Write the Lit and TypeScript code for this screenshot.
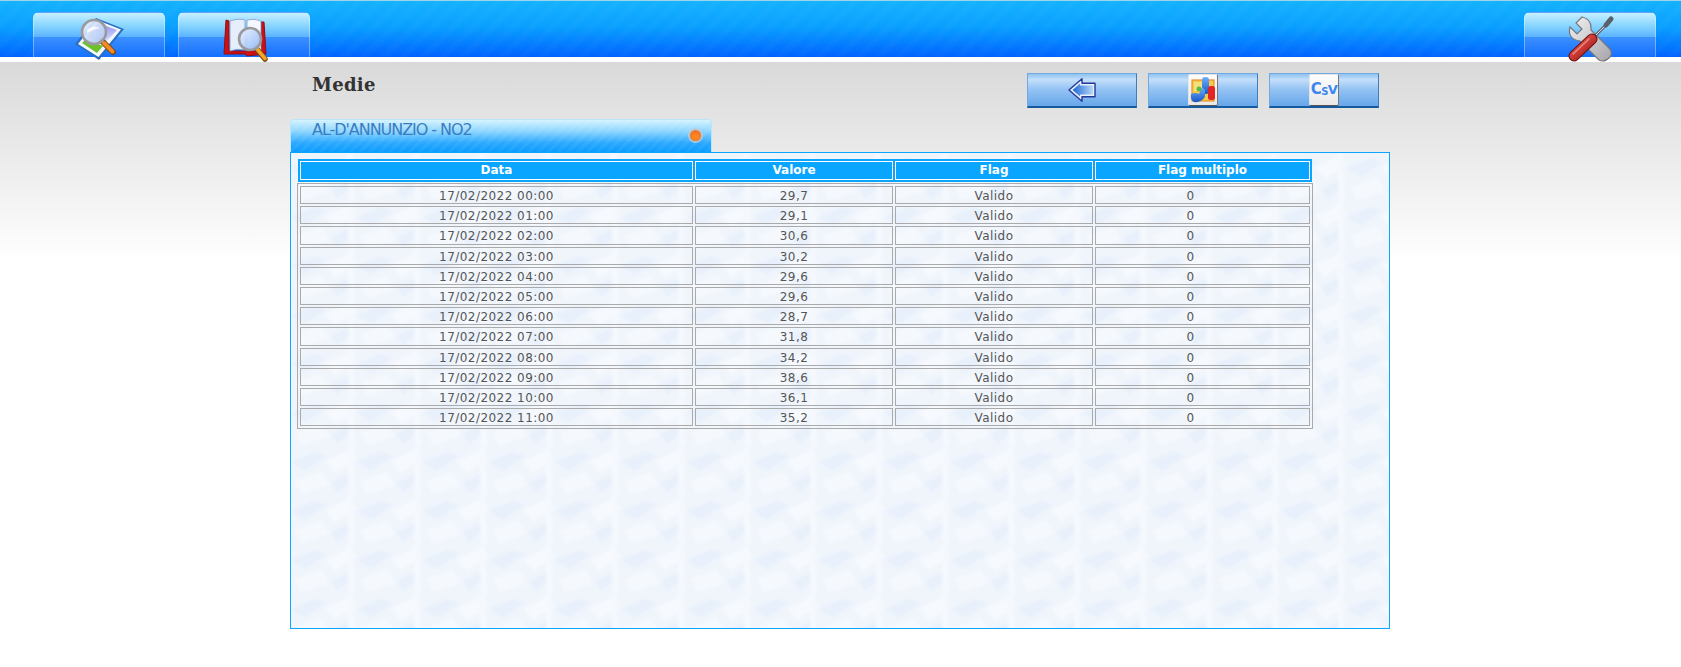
import { LitElement, html, css } from "lit";
import { customElement } from "lit/decorators.js";

const ROWS: [string, string][] = [
  ["00:00", "29,7"], ["01:00", "29,1"], ["02:00", "30,6"], ["03:00", "30,2"],
  ["04:00", "29,6"], ["05:00", "29,6"], ["06:00", "28,7"], ["07:00", "31,8"],
  ["08:00", "34,2"], ["09:00", "38,6"], ["10:00", "36,1"], ["11:00", "35,2"],
];

const mapIcon = html`<svg class="ico-map" width="52" height="46" viewBox="0 0 52 46">
  <defs>
    <linearGradient id="gl" x1="0" y1="0" x2="1" y2="1"><stop offset="0" stop-color="#eef4ff"/><stop offset="1" stop-color="#a9c4f2"/></linearGradient>
    <linearGradient id="sky" x1="0" y1="0" x2="0" y2="1"><stop offset="0" stop-color="#8f8ff0"/><stop offset="1" stop-color="#e4e8ff"/></linearGradient>
  </defs>
  <path d="M22 1 L50 12 L25 43 L1 27 Z" fill="#2a6fc0"/>
  <path d="M23 3 L47 12.5 L24.5 40 L4 27 Z" fill="#f4f8ff"/>
  <path d="M24 6 L43 13 L30 27 L12 20 Z" fill="url(#sky)"/>
  <path d="M12 22 L29 29 L23 36 L8 26 Z" fill="#6cc22a"/>
  <path d="M28 24 L39 35" stroke="#7a4a10" stroke-width="6" stroke-linecap="round"/>
  <path d="M30 26 L38.500 34.500" stroke="#f58a1f" stroke-width="4" stroke-linecap="round"/>
  <circle cx="20" cy="15" r="12" fill="url(#gl)" fill-opacity=".92" stroke="#9a9a9e" stroke-width="2.600"/>
  <path d="M13 13 Q19 7 26 11 Q20 12 13 16 Z" fill="#fff" opacity=".8"/>
</svg>`;

const bookIcon = html`<svg class="ico-book" width="48" height="46" viewBox="0 0 48 46">
  <defs><linearGradient id="gb" x1="0" y1="0" x2="1" y2="1"><stop offset="0" stop-color="#eef4ff"/><stop offset="1" stop-color="#8db6f5"/></linearGradient></defs>
  <path d="M5 3 L3 37 L24 37 L26 39 L45 37 L43 5 L40 5 L40 34 L8 34 L8 4 Z" fill="#cf0f14" stroke="#8a1018" stroke-width="1"/>
  <path d="M9 4 Q18 1 24 3 L24 33 Q16 31 9 34 Z" fill="#e6eefb" stroke="#7d9bc8" stroke-width=".8"/>
  <path d="M26 3 Q33 1 40 4 L40 34 Q33 31 26 33 Z" fill="#f3f7ff" stroke="#7d9bc8" stroke-width=".8"/>
  <path d="M35 31 L44 42" stroke="#7a4a10" stroke-width="5.500" stroke-linecap="round"/>
  <path d="M36 32 L44 41.500" stroke="#f5a623" stroke-width="3.500" stroke-linecap="round"/>
  <circle cx="29" cy="22" r="11" fill="url(#gb)" fill-opacity=".95" stroke="#9a9a9e" stroke-width="2.600"/>
</svg>`;

const toolsIcon = html`<svg class="ico-tools" width="50" height="48" viewBox="0 0 50 48">
  <defs>
    <linearGradient id="gw" x1="0" y1="0" x2="1" y2="1"><stop offset="0" stop-color="#f4f4f4"/><stop offset="1" stop-color="#a4a4aa"/></linearGradient>
    <linearGradient id="gr" x1="0" y1="0" x2="1" y2="1"><stop offset="0" stop-color="#ee6055"/><stop offset="1" stop-color="#a01414"/></linearGradient>
  </defs>
  <path d="M16 2 L10 8 L16 14 L11 19 L4 12 Q1 24 14 26 L33 45 Q38 48 44 42 Q47 37 43 33 L25 15 Q26 4 16 2 Z" fill="url(#gw)" stroke="#77777d" stroke-width="1.200"/>
  <path d="M26 24 L42 8" stroke="#5f656e" stroke-width="3"/>
  <path d="M27 23 L41 9" stroke="#d8dbe0" stroke-width="1"/>
  <path d="M40 10 L45 4" stroke="#58606a" stroke-width="5" stroke-linecap="round"/>
  <path d="M8 41 L26 24" stroke="#6d1010" stroke-width="11" stroke-linecap="round"/>
  <path d="M8 41 L26 24" stroke="url(#gr)" stroke-width="9" stroke-linecap="round"/>
  <path d="M7 39 L23 24" stroke="#f6a79f" stroke-width="1.500" stroke-linecap="round" opacity=".7"/>
</svg>`;

const backIcon = html`<svg width="28" height="24" viewBox="0 0 28 24">
  <defs><linearGradient id="ga" x1="0" y1="0" x2="1" y2="0"><stop offset="0" stop-color="#1f66d6"/><stop offset="1" stop-color="#b6d8f9"/></linearGradient></defs>
  <path d="M1 12 L14 .8 L14 5.200 L27 5.200 L27 18.800 L14 18.800 L14 23.200 Z" fill="#e8f0fc" stroke="#26379a" stroke-width="1.400" stroke-linejoin="round"/>
  <path d="M4.500 12 L12 5.500 L12 7.500 L25 7.500 L25 16.500 L12 16.500 L12 18.500 Z" fill="url(#ga)"/>
</svg>`;

const chartIcon = html`<svg width="26" height="26" viewBox="0 0 26 26">
  <defs><linearGradient id="gc" x1="0" y1="0" x2="0" y2="1"><stop offset="0" stop-color="#6fb0ff"/><stop offset="1" stop-color="#1858c8"/></linearGradient></defs>
  <rect x="2" y="3" width="22" height="21" fill="#f7c948" stroke="#e8912a" stroke-width="1.200"/>
  <rect x="4" y="5" width="11" height="9" fill="#f3e27c"/>
  <rect x="12" y="0" width="7" height="17" rx="3" fill="url(#gc)"/>
  <rect x="18" y="9" width="7" height="14" rx="2.500" fill="#e22626"/>
  <path d="M1 17 Q6 15 9 17 L12 10 L15 13 L15 20 Q11 26 4 25 Q0 23 1 17 Z" fill="url(#gc)"/>
  <circle cx="9" cy="12" r="2.500" fill="#58b848"/>
</svg>`;

@customElement("app-root")
export class AppRoot extends LitElement {
  static styles = css`
    :host {
      display: block;
      min-height: 667px;
      background: #fff;
      font-family: "DejaVu Sans", sans-serif;
    }
    .header {
      border-top: 1px solid #9fd4ee;
      border-bottom: 5px solid #fff;
      background:
        repeating-linear-gradient(135deg, rgba(255,255,255,.018) 0 6px, rgba(255,255,255,0) 6px 14px),
        linear-gradient(#15b2ff, #0aa0ff 45%, #0064ff);
      display: flex;
      padding: 11px 25px 0 33px;
      box-sizing: border-box;
      height: 62px;
      gap: 13px;
    }
    .tab {
      width: 132px;
      height: 45px;
      box-sizing: border-box;
      border-radius: 6px 6px 0 0;
      border: 1px solid rgba(255,255,255,.35);
      border-bottom: none;
      background: linear-gradient(#c6f0ff, #86d4ff 30%, #5cb4ff 54%, #3c90ff 55%, #1470ff 100%);
      display: flex;
      justify-content: center;
      align-items: flex-start;
    }
    .tab svg { flex: none; display: block; }
    .ico-map { margin: 4px 0 0 2px; }
    .ico-book { margin: 4px 0 0 1px; }
    .ico-tools { margin: 2px 0 0 2px; }
    .spacer { flex: 1; }
    .main {
      background: linear-gradient(#d9d9d9, #fff 200px);
      padding-bottom: 38px;
    }
    .wrap { width: 1100px; margin-left: 290px; }
    .top {
      display: flex;
      justify-content: space-between;
      align-items: flex-start;
      height: 57px;
      box-sizing: border-box;
      padding: 11px 11px 0 22px;
    }
    h1 {
      margin: 1px 0 0;
      font: bold 18px/22px "DejaVu Serif", serif;
      letter-spacing: .3px;
      color: #333;
    }
    .btns { display: flex; gap: 11px; }
    .btn {
      width: 110px;
      height: 35px;
      box-sizing: border-box;
      border: 1px solid #74a9e0;
      border-bottom: 2px solid #155a9f;
      border-right-color: #3f7cbd;
      background: linear-gradient(#8fc2f2, #c4dffa 18%, #97c5f4 45%, #66a6ea 100%);
      display: flex;
      justify-content: center;
      align-items: center;
    }
    .tile {
      width: 30px;
      height: 32px;
      margin: -2px 0 -1px;
      box-sizing: border-box;
      border-radius: 2px;
      border: 1px solid #e4e4e4;
      border-right-color: #777;
      border-bottom-color: #555;
      background: linear-gradient(#fdfdfd, #e8e8e8);
      display: flex;
      justify-content: center;
      align-items: center;
    }
    .csv {
      color: #3c86ee;
      font: bold 15px/1 "DejaVu Sans", sans-serif;
      letter-spacing: -.6px;
      display: flex;
      align-items: baseline;
    }
    .csv small { font-size: 10px; position: relative; top: 1px; }
    .csv em { font-style: normal; font-size: 13px; }
    .ptab {
      width: 422px;
      height: 33px;
      box-sizing: border-box;
      border-radius: 4px 4px 0 0;
      border: 1px solid #b9e6fb;
      border-bottom: none;
      background:
        repeating-linear-gradient(135deg, rgba(255,255,255,.05) 0 3px, rgba(255,255,255,0) 3px 7px),
        linear-gradient(#d4f3ff, #8ed6ff 35%, #2eaaff 70%, #0a9cff);
      display: flex;
      justify-content: space-between;
      padding: 0 10px 0 21px;
    }
    .ptab span {
      font: 16px/19px "DejaVu Sans", sans-serif;
      letter-spacing: -1.05px;
      color: #3a7cc0;
    }
    .dot {
      width: 11px;
      height: 11px;
      margin-top: 10px;
      border-radius: 50%;
      box-shadow: 0 0 0 2px rgba(190,200,210,.85);
      background: radial-gradient(circle at 50% 65%, #ff8a1e, #ee6a26);
    }
    .panel {
      height: 477px;
      box-sizing: border-box;
      border: 1px solid #0aa5ff;
      padding: 6px 7px;
      background-color: #f0f5fc;
      background-image: url("data:image/svg+xml,%3Csvg xmlns='http://www.w3.org/2000/svg' width='66' height='49'%3E%3Cdefs%3E%3Cfilter id='b' x='-20%25' y='-20%25' width='140%25' height='140%25'%3E%3CfeGaussianBlur stdDeviation='1.800'/%3E%3C/filter%3E%3C/defs%3E%3Crect width='66' height='49' fill='%23f0f5fc'/%3E%3Cg filter='url(%23b)'%3E%3Cpath d='M0 15 L24 5 L36 9 L14 24 Z' fill='%23e8f0fb'/%3E%3Cpath d='M34 14 L58 3 L66 12 L44 26 Z' fill='%23f6f9fe'/%3E%3Cpath d='M4 34 L30 25 L38 38 L10 47 Z' fill='%23f5f9fe'/%3E%3Cpath d='M40 36 L64 24 L62 33 L46 46 Z' fill='%23e8f0fb'/%3E%3Cpath d='M56 0 L62 0 L64 49 L58 49 Z' fill='%23f5f9fe'/%3E%3C/g%3E%3C/svg%3E");
    }
    table {
      table-layout: fixed;
      border-collapse: separate;
      border-spacing: 2px;
      font-size: 12px;
      text-align: center;
    }
    col.a { width: 393px; }
    col.b { width: 198px; }
    col.c { width: 198px; }
    col.d { width: 215px; }
    .thead { width: 1014px; background: #0aa5ff; height: 23px; }
    .thead th {
      border: 1px solid #fff;
      color: #fff;
      font-weight: bold;
      padding: 1px 0 2px;
      line-height: 14px;
    }
    .tbody {
      width: 1016px;
      margin: 1px 0 0 -1px;
      border: 1px solid #aaa;
    }
    .tbody td {
      border: 1px solid #aaa;
      color: #555;
      padding: 2px 0 0;
      line-height: 14.2px;
      letter-spacing: .45px;
    }
    .tbody td.last { padding-right: 24px; }
  `;

  render() {
    return html`
      <div class="header">
        <div class="tab">${mapIcon}</div>
        <div class="tab">${bookIcon}</div>
        <div class="spacer"></div>
        <div class="tab">${toolsIcon}</div>
      </div>
      <div class="main">
        <div class="wrap">
          <div class="top">
            <h1>Medie</h1>
            <div class="btns">
              <div class="btn">${backIcon}</div>
              <div class="btn"><div class="tile">${chartIcon}</div></div>
              <div class="btn"><div class="tile"><span class="csv">C<small>S</small><em>V</em></span></div></div>
            </div>
          </div>
          <div class="ptab"><span>AL-D'ANNUNZIO - NO2</span><div class="dot"></div></div>
          <div class="panel">
            <table class="thead">
              <colgroup><col class="a"/><col class="b"/><col class="c"/><col class="d"/></colgroup>
              <tr><th>Data</th><th>Valore</th><th>Flag</th><th>Flag multiplo</th></tr>
            </table>
            <table class="tbody">
              <colgroup><col class="a"/><col class="b"/><col class="c"/><col class="d"/></colgroup>
              ${ROWS.map(([t, v]) => html`<tr><td>17/02/2022 ${t}</td><td>${v}</td><td>Valido</td><td class="last">0</td></tr>`)}
            </table>
          </div>
        </div>
      </div>
    `;
  }
}
